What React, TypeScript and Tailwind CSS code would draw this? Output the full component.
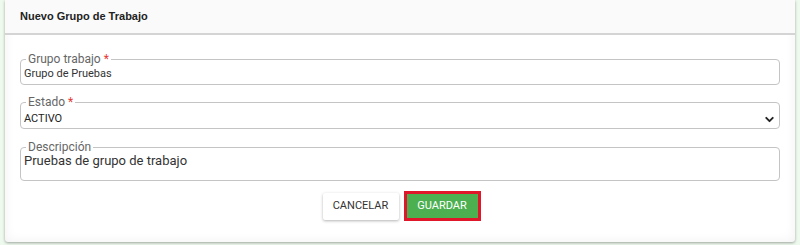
import { ChevronDown } from 'lucide-react'

function Field({ label, required, children, className }: { label: string; required?: boolean; children: React.ReactNode; className?: string }) {
  return (
    <fieldset className={`border border-[#c4c4c4] rounded-[4px] px-[3px] ${className ?? ''}`}>
      <legend className="ml-[2px] px-[2px] text-[12px] leading-[12px] text-[#666]">
        {label}
        {required && <span className="text-[#e53935]"> *</span>}
      </legend>
      {children}
    </fieldset>
  )
}

export default function App() {
  return (
    <div className="w-[800px] h-[245px] bg-[#effaef] pl-[5px] pr-[5px] pt-0 font-['Roboto',sans-serif]">
      <div className="h-[242px] bg-white rounded-b-[3px] shadow-[0_1px_3px_rgba(0,0,0,0.35),inset_0_0_12px_rgba(0,0,0,0.06)] flex flex-col">
        {/* header */}
        <div className="h-[35px] border-b-2 border-[#d4d4d4] px-[15px] flex items-center bg-[#fafafa]">
          <span className="text-[11px] font-bold text-[#222] font-['Liberation_Sans',sans-serif]">Nuevo Grupo de Trabajo</span>
        </div>

        <div className="flex flex-col px-[15px] pt-[18px]">
          <Field label="Grupo trabajo" required className="h-[32px]">
            <div className="text-[11px] leading-[14px] text-[#333] pt-[2px]">Grupo de Pruebas</div>
          </Field>

          <Field label="Estado" required className="h-[33px] mt-[11px]">
            <div className="flex items-center justify-between pr-0 pt-[3px]">
              <span className="text-[11px] leading-[16px] text-[#222]">ACTIVO</span>
              <ChevronDown className="w-[13px] h-[13px] text-[#222]" strokeWidth={3.5} />
            </div>
          </Field>

          <Field label="Descripción" className="h-[40px] mt-[12px]">
            <div className="text-[13px] leading-[16px] text-[#333]">Pruebas de grupo de trabajo</div>
          </Field>

          <div className="flex justify-center items-center gap-[5px] mt-[10px] pl-[3px]">
            <button className="w-[76px] h-[27px] bg-white text-[#333] text-[11px] rounded-[2px] shadow-[0_1px_3px_rgba(0,0,0,0.3)]">
              CANCELAR
            </button>
            <button className="w-[77px] h-[30px] bg-[#4caf50] text-white text-[11px] border-[3px] border-[#e0162b]">
              GUARDAR
            </button>
          </div>
        </div>
      </div>
    </div>
  )
}
